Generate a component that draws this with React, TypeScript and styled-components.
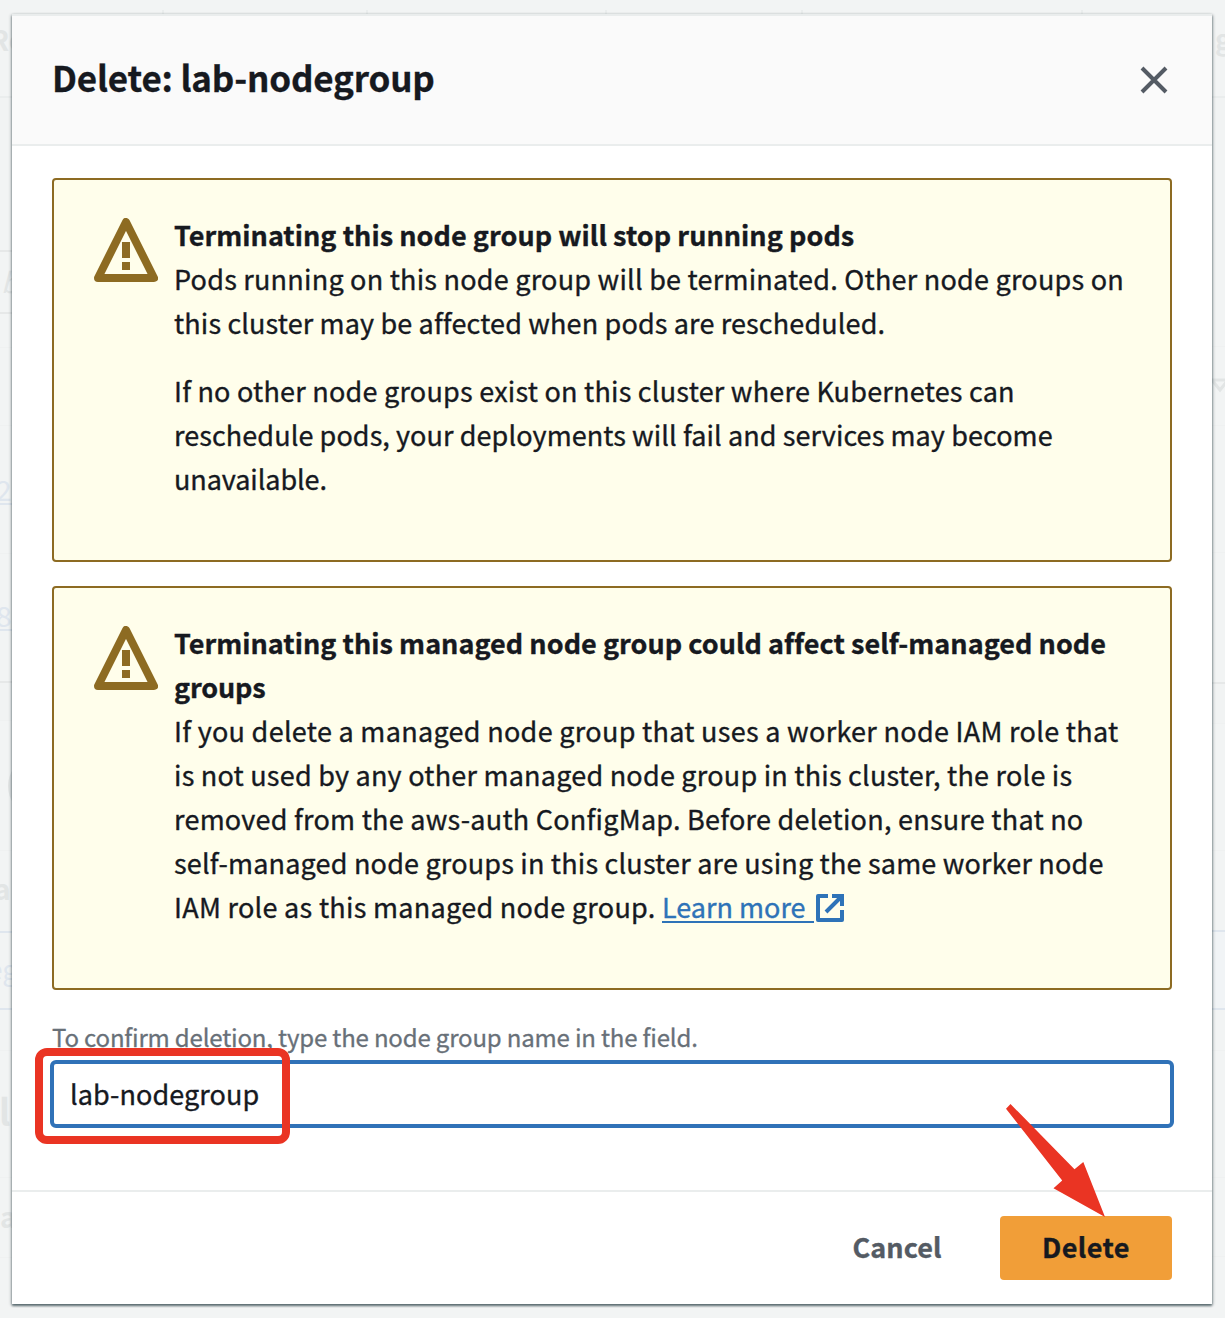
import React, { useState } from "react";
import styled, { createGlobalStyle } from "styled-components";

const GlobalStyle = createGlobalStyle`
  * { box-sizing: border-box; }
  body { margin: 0; background: #f2f4f4; overflow: hidden; }
  body, input, button {
    font-family: "Noto Sans CJK SC", "Noto Sans", sans-serif;
    color: #16191f;
  }
`;

const Screen = styled.div`
  position: relative;
  width: 1225px;
  height: 1318px;
  overflow: hidden;
  background: #f2f4f4;
`;

/* Dimmed page behind the dialog */
const Page = styled.div`
  position: absolute;
  inset: 0;
  display: flex;
  justify-content: space-between;
`;

const Strip = styled.div<{ $w: number }>`
  display: flex;
  flex-direction: column;
  width: ${(p) => p.$w}px;
  overflow: hidden;
`;

const Band = styled.div<{ $h: number; $line?: string; $bg?: string; $lw?: number }>`
  display: flex;
  align-items: flex-end;
  flex: none;
  height: ${(p) => p.$h}px;
  background: ${(p) => p.$bg ?? "transparent"};
  border-bottom: ${(p) => p.$lw ?? 2}px solid ${(p) => p.$line ?? "#eff1f1"};
`;

const Ghost = styled.span<{ $x: number; $up: number; $size?: number; $c?: string; $bold?: boolean; $italic?: boolean; $under?: boolean }>`
  flex: none;
  margin-left: ${(p) => p.$x}px;
  margin-bottom: ${(p) => p.$up}px;
  font-size: ${(p) => p.$size ?? 28}px;
  line-height: 1;
  white-space: nowrap;
  color: ${(p) => p.$c ?? "#e2e5e5"};
  font-weight: ${(p) => (p.$bold ? 700 : 400)};
  font-style: ${(p) => (p.$italic ? "italic" : "normal")};
  border-bottom: ${(p) => (p.$under ? "2px solid #dfe6ee" : "0")};
`;

const Ring = styled.span`
  flex: none;
  width: 60px;
  height: 60px;
  margin: 0 0 34px 8px;
  border: 6px solid #e2e5e5;
  border-radius: 50%;
`;

const TickRow = styled.div`
  position: absolute;
  top: 10px;
  left: 162px;
  display: grid;
  grid-template-columns: 204px 239px 196px 280px 2px;
`;

const Tick = styled.i`
  width: 2px;
  height: 5px;
  background: #eaeded;
`;

const Dialog = styled.section`
  position: absolute;
  left: 12px;
  top: 14px;
  display: flex;
  flex-direction: column;
  width: 1200px;
  height: 1290px;
  background: #fff;
  border-top: 2px solid #eaeded;
  box-shadow: 0 2px 2px rgba(0, 28, 36, 0.42), 1px 1px 3px rgba(0, 28, 36, 0.3), -1px 1px 3px rgba(0, 28, 36, 0.25);
`;

const Header = styled.header`
  display: flex;
  align-items: center;
  justify-content: space-between;
  height: 130px;
  padding: 0 42px 0 40px;
  background: #fafafa;
  border-bottom: 2px solid #eaeded;
`;

const Title = styled.h2`
  margin: 0 0 6px;
  font-size: 35px;
  line-height: 44px;
  font-weight: 700;
  letter-spacing: -0.19px;
  -webkit-text-stroke: 0.3px;
`;

const IconButton = styled.button`
  display: flex;
  padding: 0;
  border: 0;
  background: none;
`;

const Body = styled.div`
  display: flex;
  flex-direction: column;
  flex: 1;
  padding: 32px 38px 0;
`;

const Alert = styled.div<{ $h: number }>`
  display: flex;
  gap: 16px;
  height: ${(p) => p.$h}px;
  margin: 0 2px 24px;
  padding: 33px 40px 0;
  background: #fffeeb;
  border: 2px solid #8d6b22;
  border-radius: 4px;
`;

const WarnIcon = styled.svg`
  flex: none;
  width: 64px;
  height: 64px;
  margin-top: 5px;
`;

const Copy = styled.div`
  display: flex;
  flex-direction: column;
`;

const Line = styled.div<{ $ls?: number; $bold?: boolean; $gap?: boolean }>`
  height: 44px;
  margin-top: ${(p) => (p.$gap ? 24 : 0)}px;
  font-size: 27px;
  line-height: 44px;
  white-space: nowrap;
  font-weight: ${(p) => (p.$bold ? 700 : 400)};
  letter-spacing: ${(p) => p.$ls ?? 0}px;
  -webkit-text-stroke: 0.35px;
`;

const Link = styled.a`
  display: inline-flex;
  align-items: center;
  height: 34px;
  color: #2e73b8;
  letter-spacing: 0;
`;

const LinkText = styled.span`
  height: 33px;
  line-height: 33px;
  padding-right: 8px;
  margin-right: 2px;
  border-bottom: 2px solid #2e73b8;
`;

const LinkIcon = styled.svg`
  margin-top: 2px;
`;

const Hint = styled.label`
  height: 36px;
  margin: -4px 2px 0;
  padding-top: 9px;
  font-size: 24px;
  line-height: 36px;
  letter-spacing: -0.17px;
  -webkit-text-stroke: 0.3px;
  color: #687078;
  white-space: nowrap;
`;

const Field = styled.input`
  width: 1124px;
  height: 68px;
  margin-top: 14px;
  padding: 0 16px 2px;
  background: #fff;
  border: 4px solid #3072b8;
  border-radius: 6px;
  outline: 0;
  font-size: 27px;
  letter-spacing: 0.08px;
  -webkit-text-stroke: 0.35px;
`;

const Footer = styled.footer`
  display: flex;
  align-items: center;
  justify-content: flex-end;
  height: 114px;
  padding: 0 40px;
  border-top: 2px solid #eaeded;
`;

const Button = styled.button<{ $primary?: boolean; $w: number }>`
  width: ${(p) => p.$w}px;
  height: 64px;
  padding: 0 0 4px;
  border: 0;
  border-radius: 4px;
  font-size: 27px;
  font-weight: 700;
  letter-spacing: ${(p) => (p.$primary ? 0.4 : 0.1)}px;
  -webkit-text-stroke: 0.35px;
  background: ${(p) => (p.$primary ? "#f19e38" : "transparent")};
  color: ${(p) => (p.$primary ? "#16191f" : "#545b64")};
`;

const Highlight = styled.div`
  position: absolute;
  left: 35px;
  top: 1048px;
  width: 255px;
  height: 96px;
  border: 8px solid #ea3423;
  border-radius: 12px;
  pointer-events: none;
`;

const Pointer = styled.svg`
  position: absolute;
  left: 1000px;
  top: 1100px;
  pointer-events: none;
`;

const Chevron = styled.svg`
  flex: none;
  margin-bottom: 30px;
`;

const Warning = () => (
  <WarnIcon viewBox="0 0 16 16" fill="none" stroke="#8d6b22" strokeWidth="2" strokeLinejoin="round">
    <path d="M8 1 15 15H1Z" />
    <path d="M8 6v4M8 11v2" />
  </WarnIcon>
);

export default function App() {
  const [name, setName] = useState("lab-nodegroup");
  return (
    <>
      <GlobalStyle />
      <Screen>
        <Page>
          <Strip $w={14}>
            <Band $h={98} $line="#eaeded"><Ghost $x={-10} $up={43} $bold>Ro</Ghost></Band>
            <Band $h={34} $bg="#f1f3f3" $line="#f2f4f4" />
            <Band $h={120} $line="#e6e8e8" />
            <Band $h={62} $line="#e6e8e8"><Ghost $x={1} $up={17} $italic>b</Ghost></Band>
            <Band $h={34} $lw={1} />
            <Band $h={78} $lw={1} />
            <Band $h={128} $lw={1}><Ghost $x={-4} $up={48} $c="#dfe6ee" $under>2</Ghost></Band>
            <Band $h={129} $line="#e6e8e8"><Ghost $x={-4} $up={50} $c="#dfe6ee" $under>8</Ghost></Band>
            <Band $h={38} $bg="#f1f3f3" $lw={1} />
            <Band $h={130} $lw={1}><Ring /></Band>
            <Band $h={82} $line="#dfe6ee"><Ghost $x={-6} $up={29} $bold>ar</Ghost></Band>
            <Band $h={77} $line="#dfe6ee"><Ghost $x={-13} $up={26} $c="#dfe6ee">eg</Ghost></Band>
            <Band $h={41} $lw={1} />
            <Band $h={127} $lw={1}><Ghost $x={-1} $up={49} $size={36} $bold>l</Ghost></Band>
            <Band $h={80} $lw={1}><Ghost $x={0} $up={27} $bold>a</Ghost></Band>
          </Strip>
          <Strip $w={14}>
            <Band $h={98} $line="#eaeded"><Ghost $x={4} $up={44} $bold>g</Ghost></Band>
            <Band $h={34} $bg="#f1f3f3" $line="#f2f4f4" />
            <Band $h={215} $lw={1} />
            <Band $h={79} $lw={1}>
              <Chevron width="18" height="18" viewBox="0 0 18 18" fill="none" stroke="#e2e5e5" strokeWidth="3"><path d="M1 3h16L9 13Z" /></Chevron>
            </Band>
            <Band $h={127} $lw={1} />
            <Band $h={131} $line="#e6e8e8" />
            <Band $h={40} $bg="#f1f3f3" $lw={1} />
            <Band $h={127} $lw={1} />
            <Band $h={81} $line="#dfe6ee" />
            <Band $h={78} $line="#dfe6ee" $bg="#f1f4f6" />
            <Band $h={41} $lw={1} />
            <Band $h={127} $lw={1} />
            <Band $h={79} $lw={1} />
          </Strip>
          <TickRow><Tick /><Tick /><Tick /><Tick /><Tick /></TickRow>
        </Page>

        <Dialog role="dialog">
          <Header>
            <Title>Delete: lab-nodegroup</Title>
            <IconButton aria-label="Close">
              <svg width="32" height="32" viewBox="0 0 16 16" stroke="#545b64" strokeWidth="2"><path d="m2 2 12 12M14 2 2 14" /></svg>
            </IconButton>
          </Header>
          <Body>
            <Alert $h={384}>
              <Warning />
              <Copy>
                <Line $bold $ls={0.04}>Terminating this node group will stop running pods</Line>
                <Line $ls={0.23}>Pods running on this node group will be terminated. Other node groups on</Line>
                <Line $ls={0.14}>this cluster may be affected when pods are rescheduled.</Line>
                <Line $gap $ls={0.23}>If no other node groups exist on this cluster where Kubernetes can</Line>
                <Line $ls={0.08}>reschedule pods, your deployments will fail and services may become</Line>
                <Line $ls={-0.08}>unavailable.</Line>
              </Copy>
            </Alert>
            <Alert $h={404}>
              <Warning />
              <Copy>
                <Line $bold $ls={0.03}>Terminating this managed node group could affect self-managed node</Line>
                <Line $bold $ls={-0.15}>groups</Line>
                <Line $ls={0.3}>If you delete a managed node group that uses a worker node IAM role that</Line>
                <Line $ls={0.225}>is not used by any other managed node group in this cluster, the role is</Line>
                <Line $ls={0.245}>removed from the aws-auth ConfigMap. Before deletion, ensure that no</Line>
                <Line $ls={0.19}>self-managed node groups in this cluster are using the same worker node</Line>
                <Line $ls={0.29}>
                  IAM role as this managed node group.{" "}
                  <Link>
                    <LinkText>Learn more</LinkText>
                    <LinkIcon width="28" height="28" viewBox="0 0 28 28" fill="none" stroke="#2e73b8" strokeWidth="4">
                      <path d="M12 2H2v24h24V16" strokeLinejoin="round" />
                      <path d="M16 2h10v10M25 3 10 18" />
                    </LinkIcon>
                  </Link>
                </Line>
              </Copy>
            </Alert>
            <Hint htmlFor="confirm">To confirm deletion, type the node group name in the field.</Hint>
            <Field id="confirm" value={name} onChange={(e) => setName(e.target.value)} />
          </Body>
          <Footer>
            <Button $w={206}>Cancel</Button>
            <Button $w={172} $primary>Delete</Button>
          </Footer>
        </Dialog>

        <Highlight />
        <Pointer width="110" height="120" viewBox="1000 1100 110 120">
          <path fill="#ea3423" d="m1006 1108.7 4.5-4.7 64 65.3 8.8-7.3 21.7 55-51.5-28.7 8.7-7.8Z" />
        </Pointer>
      </Screen>
    </>
  );
}
